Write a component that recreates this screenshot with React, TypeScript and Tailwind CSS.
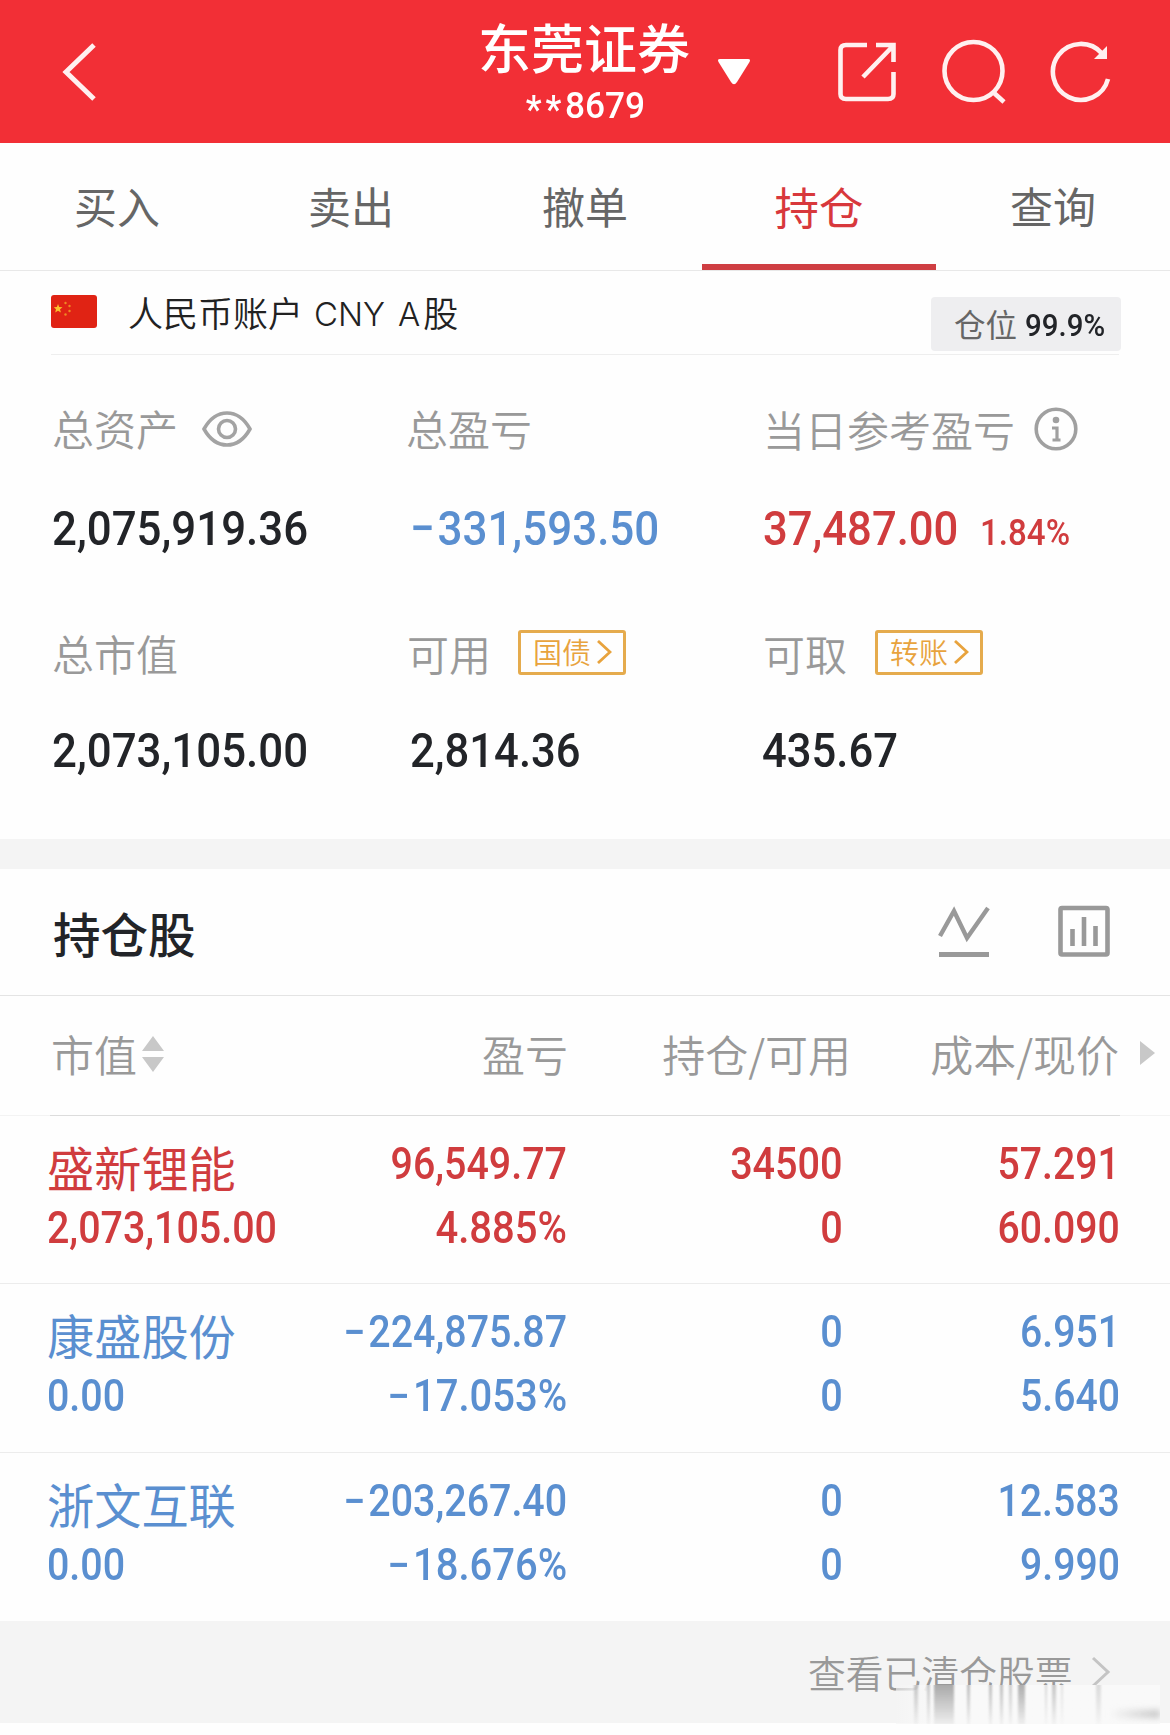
const tabs = ["买入", "卖出", "撤单", "持仓", "查询"];

const holdings = [
  {
    name: "盛新锂能",
    value: "2,073,105.00",
    profit: "96,549.77",
    rate: "4.885%",
    amount: "34500",
    available: "0",
    cost: "57.291",
    price: "60.090",
    up: true,
  },
  {
    name: "康盛股份",
    value: "0.00",
    profit: "−224,875.87",
    rate: "−17.053%",
    amount: "0",
    available: "0",
    cost: "6.951",
    price: "5.640",
    up: false,
  },
  {
    name: "浙文互联",
    value: "0.00",
    profit: "−203,267.40",
    rate: "−18.676%",
    amount: "0",
    available: "0",
    cost: "12.583",
    price: "9.990",
    up: false,
  },
];

// vertical streaks over the footer: left offset, width, strength
const streaks = [
  { left: 18, width: 4, opacity: 0.5 },
  { left: 31, width: 3, opacity: 0.5 },
  { left: 38, width: 20, opacity: 0.8 },
  { left: 71, width: 3, opacity: 0.6 },
  { left: 93, width: 3, opacity: 0.6 },
  { left: 104, width: 3, opacity: 0.6 },
  { left: 113, width: 3, opacity: 0.45 },
  { left: 122, width: 7, opacity: 0.75 },
  { left: 149, width: 2, opacity: 0.35 },
  { left: 156, width: 4, opacity: 0.5 },
  { left: 165, width: 2, opacity: 0.25 },
  { left: 200, width: 5, opacity: 0.3 },
];

function Header() {
  return (
    <header className="h-[143px] bg-[#f22f36] text-white flex items-center">
      <svg className="ml-[61px] w-9 h-[62px]" viewBox="0 0 36 62" fill="none" stroke="#fff0f0" strokeWidth="5">
        <path d="M33 4L5 31L33 58" />
      </svg>
      <div className="ml-[380px] w-[214px] h-full flex flex-col items-center">
        <h1 className="mt-[15px] h-[62px] leading-[62px] text-[53px] font-medium whitespace-nowrap">东莞证券</h1>
        <div className="mt-[8px] ml-[3px] h-[40px] flex items-center font-['Roboto'] text-[37.500px] font-medium leading-[40px] scale-x-[0.94]">
          <span className="mt-[10px] text-[38px] tracking-[4px]">**</span>
          <span>8679</span>
        </div>
      </div>
      <svg className="ml-[26px] w-[34px] h-7" viewBox="0 0 34 28" fill="white">
        <path d="M3 1H31Q34 1 32.500 4L20 24Q17 28.500 14 24L1.500 4Q0 1 3 1Z" />
      </svg>
      <svg className="ml-[86px] w-[60px] h-[62px]" viewBox="0 0 60 62" fill="none" stroke="#fff0f0" strokeWidth="4.600">
        <path d="M30 4H9Q3.500 4 3.500 9V53Q3.500 58 9 58H51Q56.500 58 56.500 53V31" />
        <path d="M39 4H56.500V21M56 5L26 36" />
      </svg>
      <svg className="ml-[45px] w-[66px] h-[66px]" viewBox="0 0 66 66" fill="none" stroke="#fff0f0" strokeWidth="4.600">
        <ellipse cx="31.500" cy="32" rx="29" ry="29" />
        <path d="M51 53L62 63" />
      </svg>
      <svg className="ml-[41px] w-[62px] h-[64px]" viewBox="0 0 62 64" fill="none" stroke="#fff0f0" strokeWidth="4.600">
        <path d="M59 39A28 28 0 1 1 53 13.500" />
        <path d="M58 6V19H45Z" fill="#fff0f0" stroke="none" />
      </svg>
    </header>
  );
}

function Tabs() {
  return (
    <nav className="h-[128px] flex border-b border-[#e8e8e8]">
      {tabs.map((tab) => (
        <div
          key={tab}
          className={`w-[234px] flex items-center justify-center ${
            tab === "持仓"
              ? "text-[44.5px] text-[#d8383c] border-b-[6px] border-[#cf3e42] pt-[5px]"
              : "text-[43px] text-[#666] pb-[2px]"
          }`}
        >
          {tab}
        </div>
      ))}
    </nav>
  );
}

function Flag() {
  return (
    <svg className="w-[46px] h-[33px] rounded-[3px]" viewBox="0 0 46 33">
      <rect width="46" height="33" fill="#e02314" />
      <path
        d="M7 9L8.200 12L11.500 12.200L9 14.300L9.900 17.500L7 15.700L4.200 17.500L5 14.300L2.800 12.200L5.900 12Z"
        fill="#fbc02d"
      />
      <g fill="#ee8a22">
        <circle cx="14.500" cy="8" r="1.200" />
        <circle cx="18.500" cy="11" r="1.200" />
        <circle cx="18.500" cy="16" r="1.200" />
        <circle cx="14.500" cy="19.500" r="1.200" />
      </g>
    </svg>
  );
}

function Account() {
  return (
    <div className="mx-[51px] h-[84px] border-b border-[#eee] flex items-start">
      <div className="mt-[24px]">
        <Flag />
      </div>
      <div className="ml-[31px] mt-[17px] leading-[48px] text-[35px] font-[350] text-[#222] flex whitespace-nowrap">
        <span>人民币账户</span>
        <span className="ml-[11px] mt-[2px] font-['Inter'] text-[33px]">CNY</span>
        <span className="ml-[13px] mt-[2px] font-['Inter'] text-[33px]">A</span>
        <span className="ml-[3px]">股</span>
      </div>
      <div className="ml-auto -mr-[2px] mt-[26px] w-[190px] h-[54px] rounded-[4px] bg-[#eeeef0] flex items-center pl-[23px]">
        <span className="text-[31.500px] leading-[50px] text-[#666] -mt-[3px]">仓位</span>
        <span className="ml-[8px] mt-px font-['Roboto'] font-medium text-[32px] text-[#222428] origin-left scale-x-[0.92]">
          99.9%
        </span>
      </div>
    </div>
  );
}

function Tag({ text }: { text: string }) {
  return (
    <div className="w-[108px] h-[45px] border-[3px] border-[#e5ab4d] rounded-[3px] flex items-center pl-[12px] text-[29px] leading-[36px] text-[#e8a33d]">
      <span className="-mt-[2px]">{text}</span>
      <svg className="ml-[5px] w-4 h-6" viewBox="0 0 16 24" fill="none" stroke="#e8a33d" strokeWidth="2.800">
        <path d="M2 1L14 12L2 23" />
      </svg>
    </div>
  );
}

const labelClass = "h-[50px] flex items-center text-[42px] leading-[50px] font-[350] text-[#999] whitespace-nowrap";
const bigClass = "flex leading-[50px] text-[49px]";

// condensed digits, the minus sign keeps a little air before the number
function Num({ children, className }: { children: string; className: string }) {
  const negative = children.startsWith("−");
  return (
    <span className={`inline-block font-['Roboto'] font-medium whitespace-nowrap ${className}`}>
      {negative && <span className="tracking-[3px]">−</span>}
      {negative ? children.slice(1) : children}
    </span>
  );
}

function Summary() {
  return (
    <section className="h-[484px] pt-[49px] pl-[52px] grid grid-cols-[355px_357px_1fr] grid-rows-[50px_50px_50px_50px] gap-y-[50px] text-[#222428]">
      <div className={labelClass}>
        <span className="-mt-[2px]">总资产</span>
        <svg className="ml-[24px] w-[50px] h-9" viewBox="0 0 50 36" fill="none" stroke="#a3a3a3" strokeWidth="3.600">
          <path d="M2 18Q11 2 25 2T48 18Q39 34 25 34T2 18Z" />
          <circle cx="25" cy="18" r="8.500" />
        </svg>
      </div>
      <div className={labelClass}>
        <span className="-ml-px -mt-[2px]">总盈亏</span>
      </div>
      <div className={labelClass}>
        <span className="-ml-px">当日参考盈亏</span>
        <svg className="ml-[19px] w-11 h-11" viewBox="0 0 44 44" fill="none" stroke="#a0a0a0" strokeWidth="3.600">
          <circle cx="22" cy="22" r="19.800" />
          <circle cx="22" cy="13" r="3.300" fill="#a0a0a0" stroke="none" />
          <path d="M18 21H23V33M18.500 33H26.500" strokeWidth="3.200" />
        </svg>
      </div>

      <div className={bigClass}>
        <Num className="origin-left scale-x-[0.895]">2,075,919.36</Num>
      </div>
      <div className={`${bigClass} text-[#5a8fd0] pl-[3px]`}>
        <Num className="origin-left scale-x-[0.897]">−331,593.50</Num>
      </div>
      <div className={`${bigClass} text-[#d03c3e] -ml-px`}>
        <Num className="origin-left scale-x-[0.89] w-[217px]">37,487.00</Num>
        <Num className="origin-left scale-x-[0.92] text-[36px] mt-[4px]">1.84%</Num>
      </div>

      <div className={`${labelClass} mt-[24px]`}>总市值</div>
      <div className={`${labelClass} mt-[24px]`}>
        <span>可用</span>
        <div className="ml-[27px] -mt-[2px]">
          <Tag text="国债" />
        </div>
      </div>
      <div className={`${labelClass} mt-[24px]`}>
        <span className="-ml-px">可取</span>
        <div className="ml-[28px] -mt-[2px]">
          <Tag text="转账" />
        </div>
      </div>

      <div className={bigClass}>
        <Num className="mt-[22px] origin-left scale-x-[0.895]">2,073,105.00</Num>
      </div>
      <div className={`${bigClass} pl-[3px]`}>
        <Num className="mt-[22px] origin-left scale-x-[0.89]">2,814.36</Num>
      </div>
      <div className={`${bigClass} -ml-[2px]`}>
        <Num className="mt-[22px] origin-left scale-x-[0.89]">435.67</Num>
      </div>
    </section>
  );
}

function HoldingsHeader() {
  return (
    <>
      <div className="h-[127px] border-b border-[#e4e4e4] flex items-center pl-[53px]">
        <h2 className="mt-[2px] text-[47.500px] leading-[60px] font-medium text-[#222428]">持仓股</h2>
        <svg className="ml-auto w-[52px] h-[52px] -mt-[2px]" viewBox="0 0 52 52" fill="none" stroke="#999" strokeWidth="4.400">
          <path d="M2 31L16 6L29 33L50 3" />
          <path d="M1 49.500H51" strokeWidth="5" />
        </svg>
        <svg className="ml-[68px] mr-[60px] w-[52px] h-[52px] -mt-[2px]" viewBox="0 0 52 52" fill="none" stroke="#999" strokeWidth="4.600">
          <rect x="2.500" y="3" width="47" height="46.500" rx="1.500" />
          <path d="M14.500 24V41M26 12V41M37.500 21V41" strokeWidth="4.600" />
        </svg>
      </div>
      <div className="h-[119px] pl-[51px] pb-[4px] flex items-center text-[43px] leading-[60px] font-[350] text-[#999] whitespace-nowrap">
        <div className="w-[260px] flex items-center">
          <span className="-mt-[2px]">市值</span>
          <svg className="ml-[5px] w-[22px] h-9" viewBox="0 0 22 36" fill="#c8c8c8">
            <path d="M11 0L22 15H0ZM11 36L22 21H0Z" />
          </svg>
        </div>
        <div className="w-[257px] text-right -mt-[2px]">盈亏</div>
        <div className="w-[283px] text-right -mt-[2px]">持仓/可用</div>
        <div className="w-[268px] text-right -mt-[2px]">成本/现价</div>
        <svg className="ml-[21px] w-[15px] h-6 -mt-px" viewBox="0 0 15 24" fill="#c8c8c8">
          <path d="M0 0L15 12L0 24Z" />
        </svg>
      </div>
      <div className="h-px bg-[#f3f3f3] px-[50px]">
        <div className="h-px bg-[#dcdcdc]" />
      </div>
    </>
  );
}

function Footer() {
  return (
    <footer className="relative h-[102px] bg-[#f4f4f4] flex items-center pl-[808px]">
      <span className="text-[37.800px] leading-[50px] font-[350] text-[#999] whitespace-nowrap">查看已清仓股票</span>
      <svg className="ml-[18px] w-5 h-8" viewBox="0 0 20 32" fill="none" stroke="#c4c4c4" strokeWidth="3">
        <path d="M2 2L17 16L2 30" />
      </svg>
      <div className="absolute left-[896px] top-[64px] w-[264px] h-[39px] overflow-hidden bg-linear-to-r from-[#f4f4f4]/60 via-[#f9f9f9] via-15% to-[#f9f9f9]">
        {streaks.map((s) => (
          <div
            key={s.left}
            className="absolute -top-1 h-[44px] bg-linear-to-b from-[#8c8c8c] to-[#8c8c8c]/10 blur-[1px]"
            style={{ left: s.left, width: s.width, opacity: s.opacity }}
          />
        ))}
        <div className="absolute right-0 bottom-[6px] w-[50px] h-[8px] bg-linear-to-r from-transparent to-[#c4c4c4] blur-[3px]" />
      </div>
    </footer>
  );
}

export default function App() {
  return (
    <div className="w-[1170px] h-[1735px] bg-[#fefefe] overflow-hidden font-['Noto_Sans_CJK_SC',sans-serif]">
      <Header />
      <Tabs />
      <Account />
      <Summary />
      <div className="h-[30px] bg-[#f4f4f4]" />
      <HoldingsHeader />
      {holdings.map((h, i) => (
        <div
          key={h.name}
          className={`pl-[47px] pt-[13px] grid grid-cols-[265px_255px_276px_277px] grid-rows-[64px_64px] leading-[64px] text-[43.500px] ${
            h.up ? "text-[#d03c3e]" : "text-[#5a8fd0]"
          } ${i < 2 ? "border-b border-[#ececec]" : ""} ${i === 1 ? "h-[169px]" : "h-[168px]"}`}
        >
          <div className="text-[47.200px] mt-[6px] whitespace-nowrap">{h.name}</div>
          <div className="text-right">
            <Num className="origin-right scale-x-[0.905]">{h.profit}</Num>
          </div>
          <div className="text-right">
            <Num className="origin-right scale-x-[0.91]">{h.amount}</Num>
          </div>
          <div className="text-right">
            <Num className="origin-right scale-x-[0.9]">{h.cost}</Num>
          </div>
          <div>
            <Num className="origin-left scale-x-[0.905]">{h.value}</Num>
          </div>
          <div className="text-right">
            <Num className="origin-right scale-x-[0.92]">{h.rate}</Num>
          </div>
          <div className="text-right">
            <Num className="origin-right scale-x-[0.91]">{h.available}</Num>
          </div>
          <div className="text-right">
            <Num className="origin-right scale-x-[0.9]">{h.price}</Num>
          </div>
        </div>
      ))}
      <Footer />
    </div>
  );
}
